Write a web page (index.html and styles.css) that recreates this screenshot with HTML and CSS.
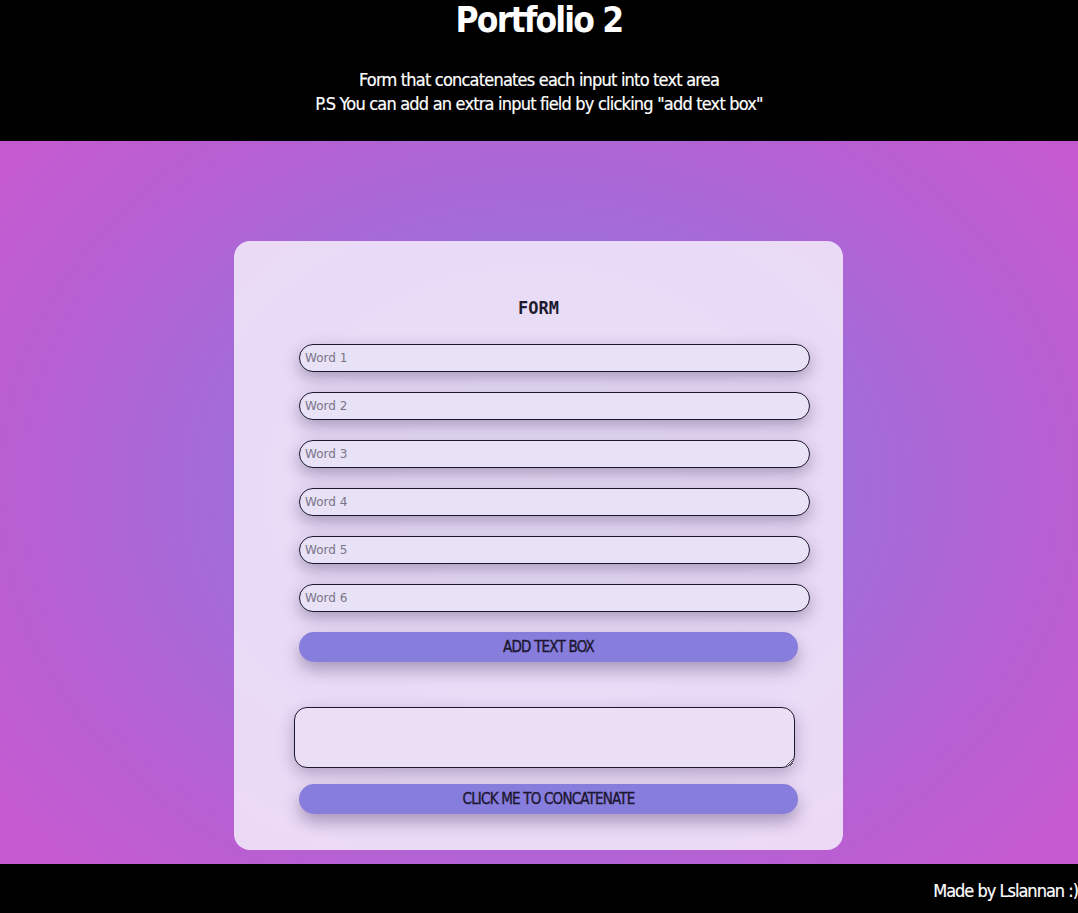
FILE: index.html
```html
<!DOCTYPE html>
<html>
<head>
<meta charset="utf-8">
<link rel="stylesheet" href="styles.css">
</head>
<body>
<header class="top">
  <h1 class="title">Portfolio 2</h1>
  <p class="subtitle">Form that concatenates each input into text area<br>P.S You can add an extra input field by clicking "add text box"</p>
</header>
<main class="stage">
  <section class="card">
    <h2 class="form-title">FORM</h2>
    <div class="fields">
      <input class="field" type="text" placeholder="Word 1">
      <input class="field" type="text" placeholder="Word 2">
      <input class="field" type="text" placeholder="Word 3">
      <input class="field" type="text" placeholder="Word 4">
      <input class="field" type="text" placeholder="Word 5">
      <input class="field" type="text" placeholder="Word 6">
    </div>
    <button class="btn btn-add">ADD TEXT BOX</button>
    <textarea class="output"></textarea>
    <button class="btn btn-concat">CLICK ME TO CONCATENATE</button>
  </section>
</main>
<footer class="bottom">Made by Lslannan :)</footer>
</body>
</html>
```
FILE: styles.css
```css
html, body {
  margin: 0;
  padding: 0;
}
body {
  background: #000;
  font-family: "DejaVu Sans Condensed", "DejaVu Sans", sans-serif;
  font-stretch: condensed;
  color: #fff;
}
.top {
  background: #000;
  height: 141px;
  text-align: center;
  box-sizing: border-box;
  padding-top: 0;
}
.title {
  margin: 0;
  font-size: 35px;
  line-height: 40px;
  font-weight: bold;
  letter-spacing: -1.8px;
}
.subtitle {
  margin: 28px 0 0;
  font-size: 18px;
  line-height: 24px;
  letter-spacing: -0.8px;
  -webkit-text-stroke: 0.2px currentColor;
}
.stage {
  height: 723px;
  box-sizing: border-box;
  padding-top: 100px;
  background: radial-gradient(ellipse 62% 75% at 50% 48%, #9a7ddd 0%, #a16dd9 45%, #b660d3 75%, #c55ad0 100%);
}
.card {
  width: 609px;
  height: 609px;
  margin-left: 234px;
  box-sizing: border-box;
  border-radius: 16px;
  background: rgba(245, 238, 252, 0.86);
  padding-top: 56px;
}
.form-title {
  margin: 0;
  text-align: center;
  font-family: "DejaVu Sans Mono", monospace;
  font-size: 17px;
  line-height: 22px;
  color: #1e1a2e;
  font-weight: bold;
}
.fields {
  display: flex;
  flex-direction: column;
  gap: 20px;
  margin: 25px 0 0 65px;
}
.field {
  width: 511px;
  height: 28px;
  box-sizing: border-box;
  border: 1px solid #1d1730;
  border-radius: 14px;
  background: #e7e2f6;
  padding: 0 5px;
  font-family: "DejaVu Sans", sans-serif;
  font-size: 12px;
  color: #333;
  box-shadow: 0 6px 16px rgba(50, 30, 80, 0.35);
  outline: none;
}
.field::placeholder {
  color: #7a7486;
}
.btn {
  display: block;
  width: 499px;
  height: 30px;
  margin-left: 65px;
  border: none;
  border-radius: 15px;
  background: #877ddd;
  color: #1c1630;
  font-family: "DejaVu Sans Condensed", "DejaVu Sans", sans-serif;
  font-stretch: condensed;
  font-size: 15px;
  letter-spacing: -0.8px;
  -webkit-text-stroke: 0.35px currentColor;
  box-shadow: 0 8px 16px rgba(50, 30, 80, 0.35);
  padding: 0;
}
.btn-add {
  margin-top: 20px;
}
.output {
  display: block;
  width: 501px;
  height: 61px;
  margin: 45px 0 0 60px;
  box-sizing: border-box;
  border: 1px solid #1d1730;
  border-radius: 13px;
  background: #ebdff5;
  box-shadow: 0 6px 16px rgba(50, 30, 80, 0.3);
  outline: none;
}
.btn-concat {
  margin-top: 16px;
}
.bottom {
  height: 49px;
  background: #000;
  color: #fff;
  text-align: right;
  font-size: 18px;
  letter-spacing: -1px;
  line-height: 54px;
  -webkit-text-stroke: 0.2px currentColor;
}
```
